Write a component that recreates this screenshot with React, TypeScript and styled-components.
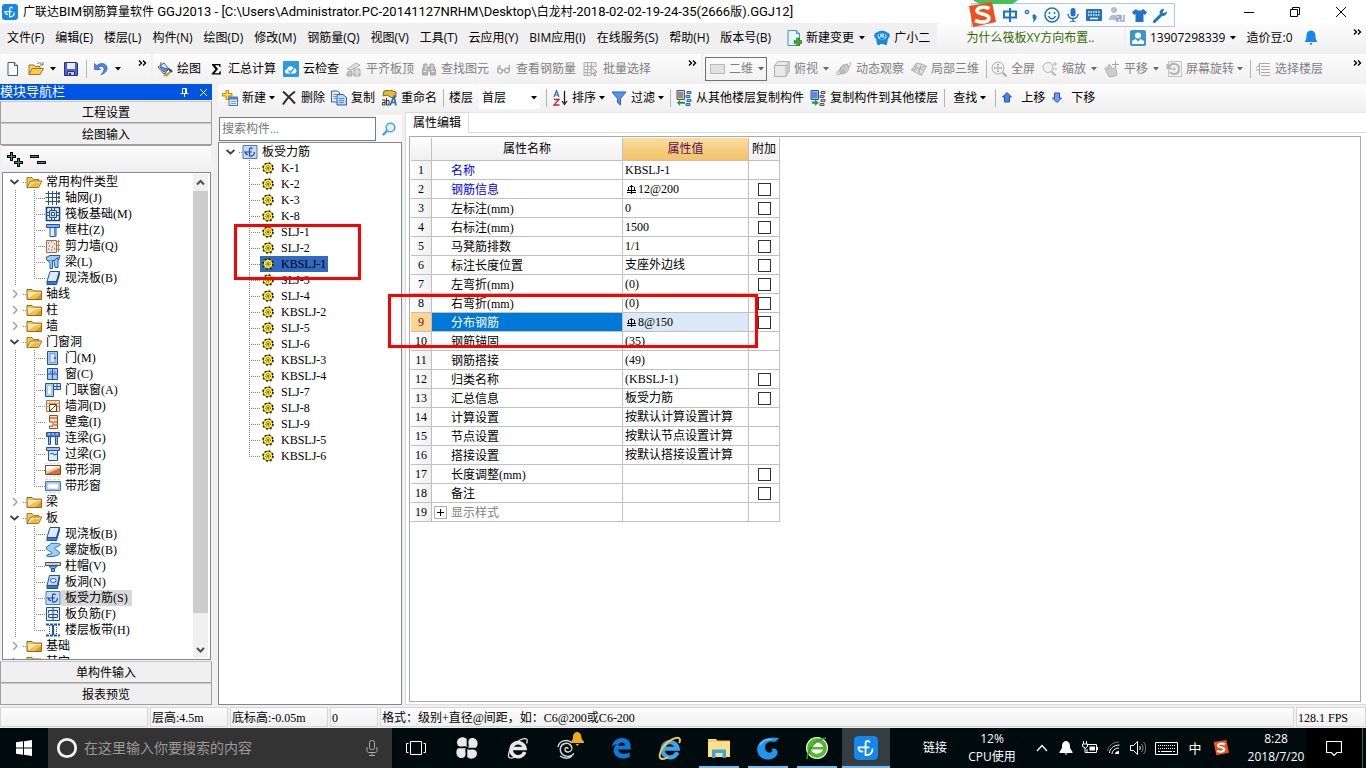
import React from 'react';
import styled, { createGlobalStyle, css } from 'styled-components';

const uiFont = '"Open Sans", "Noto Sans CJK SC", sans-serif';
const titleFont = 'Roboto, "Noto Sans CJK SC", sans-serif';
const gridFont = '"Liberation Serif", "Noto Sans CJK SC", serif';

const GlobalStyle = createGlobalStyle`
  * { box-sizing: border-box; }
  body { margin: 0; font: 12px/16px ${uiFont}; color: #000; background: #f0f0f0; }
  button, input, select { font: inherit; color: inherit; }
  button { background: none; border: 0; padding: 0; margin: 0; white-space: nowrap; }
`;

/* ---------- icons ---------- */

const blueFill = '#a9c9f7';
const blueLine = '#1f4fb0';

const icons: Record<string, React.ReactNode> = {
  app: (
    <>
      <rect width="16" height="16" rx="3" fill="#1487ea" />
      <path d="M10.300 4C9.800 2.800 7.700 2.900 7.700 4.800V12.800C10.500 12.800 12.300 11.300 12.300 8.800M3 7.600h6.800M3 7.600c0 1.800 1 2.800 2.700 2.800" fill="none" stroke="#fff" strokeWidth="1.200" strokeLinecap="round" />
    </>
  ),
  newFile: (
    <>
      <path d="M3 1.500h6.500l3 3v10H3z" fill="#fff" stroke="#3d5a85" />
      <path d="M9.500 1.500v3h3" fill="#cfe0f5" stroke="#3d5a85" />
    </>
  ),
  open: (
    <>
      <path d="M1 13.500V4h5l1 1.500h5V8" fill="#f5d27a" stroke="#a8781c" />
      <path d="M1 13.500 4 7.500h11.500L12 13.500z" fill="#ffc94a" stroke="#a8781c" />
      <path d="M9 3c2-2 4-1.500 5 .5M15 1v3h-3" fill="none" stroke="#5d7480" />
    </>
  ),
  save: (
    <>
      <path d="M1.500 1.500h12l1 1v12h-13z" fill="#5262c9" stroke="#2a2f86" />
      <path d="M4 2h8v6H4z" fill="#e8ecfb" />
      <path d="M4.500 10.500h7v4h-7z" fill="#c5cbe6" stroke="#2a2f86" />
      <path d="M6 12h2v2H6z" fill="#2a2f86" />
    </>
  ),
  undo: <path d="M1.500 2.500v6h6L5.500 6.300c3-2 6-.5 5.500 2.500-.4 2-1.500 3.200-3 5 4.500-2 6.500-4.300 6-7.300C13.300 2.500 8 1 3.800 4.600z" fill="#4c86e0" stroke="#2558b5" strokeWidth=".7" />,
  draw: (
    <>
      <path d="m1 6 6-4 5 6-5 5z" fill="#dfe9f5" stroke="#3f5f8e" />
      <path d="M4 1v6M3 6l4 5 4-3z" fill="#6f94cc" stroke="#3f5f8e" />
      <path d="m9 15 6-6M7 15l3-3" stroke="#c99a2e" strokeWidth="2" />
      <path d="m12 8 3 3" stroke="#27457a" strokeWidth="2" />
    </>
  ),
  sum: <path d="M4 3h8.500v3H11.500L11 4.300H7L10 8l-3.500 4.200H11l.8-2h1V13.500H3.700v-1L7.500 8.300 4 4z" fill="#000" />,
  cloud: (
    <>
      <rect width="16" height="16" rx="1" fill="#2a9be0" />
      <path d="M4 12.500c-3-.5-2.500-4 0-4C4.500 5 9 4 10.500 7c3.500 0 4 5 1 5.500z" fill="#fff" />
      <path d="m5.500 9.500 2 2 3.500-4" fill="none" stroke="#2a9be0" strokeWidth="1.200" />
    </>
  ),
  align: (
    <>
      <path d="m1 8 9-6 4 2-9 5z" fill="#e2e2e2" stroke="#b0b0b0" />
      <path d="M3 10h3v5H1v-3zM8 8h6v7H8z" fill="#c4c4c4" stroke="#acacac" />
      <path d="M8 11h6M11 8v7" stroke="#eee" />
    </>
  ),
  find: (
    <>
      <path d="M3 3h3v3h3V3h3l2.500 6v5h-5v-4h-3v4h-5V9z" fill="#b4b4b4" stroke="#a4a4a4" />
      <path d="M2.500 10.500h3M10.500 10.500h3M5 4v5M11 4v5" stroke="#eee" />
    </>
  ),
  glasses: (
    <g fill="none" stroke="#a8a8a8" strokeWidth="1.300">
      <circle cx="4" cy="10" r="2.300" />
      <circle cx="11" cy="9.500" r="2.300" />
      <path d="M6.200 9.500 9 9M1.800 9C2 6 4 5 5 5M13.300 9V4" />
    </g>
  ),
  batch: (
    <>
      <path d="M1 1.500h12v4H1zM1 5.500v9h6M1 8.500h7M1 11.500h6M4.500 1.500v13M8.500 1.500v5" stroke="#b0b0b0" fill="#ececec" />
      <path d="m8 6 6 5-3 .4 2 3-1.500.6-1.500-3L8 14z" fill="#eee" stroke="#9a9a9a" />
    </>
  ),
  plane: <path d="M.5 3.500h14v9H.5z" fill="#e2e2e2" stroke="#b9b9b9" />,
  cube: (
    <>
      <path d="M.5 4.500 4 .5h11.500V10L12 15.500H.5z" fill="#e9e9e9" stroke="#b0b0b0" />
      <path d="M.5 4.500H12v11M12 4.500l3.500-4" fill="none" stroke="#b0b0b0" />
      <path d="m12 4.500 3.500-4V10L12 15z" fill="#c8c8c8" />
    </>
  ),
  orbit: (
    <>
      <path d="M5 5c3-3 7-3 8 0s-1 7-5 8-6-1-5-4z" fill="#bdbdbd" />
      <path d="M13 2c4-1 1 4-4 8s-9 5-8 2 6-7 11-9" fill="none" stroke="#a9a9a9" />
      <path d="m6 5 5 6M9 4l3 5" stroke="#e5e5e5" />
    </>
  ),
  part3d: (
    <g fill="#e0e0e0" stroke="#b3b3b3">
      <path d="m.5 9 5-7 5 1 5 2-5 9.500-4-2z" />
      <path d="M5.500 2 4 10.500m6.500-7.500-3 9m-4.500-6.500 10 4M.5 9l5-1M10 14l-3-6 8-3" fill="none" />
    </g>
  ),
  zoomAll: (
    <g fill="none" stroke="#adadad">
      <circle cx="7" cy="7" r="6" fill="#f2f2f2" />
      <path d="M7 3v8M3 7h8M6 4l1-1 1 1M6 10l1 1 1-1M4 6 3 7l1 1M10 6l1 1-1 1" />
      <path d="m11.500 11.500 4 4" strokeWidth="2" />
    </g>
  ),
  zoom: (
    <g fill="none" stroke="#b3b3b3">
      <circle cx="6" cy="6.500" r="5" fill="#f2f2f2" />
      <path d="m9.500 10.500 4 4" strokeWidth="2" />
      <path d="M11 3h4M13 1v4M11 8h4" />
    </g>
  ),
  pan: (
    <>
      <path d="M1 8c0-2 2-2 3 .5L4 4.500c1-1.500 2-1 2.500 0l1.500 3c2-.5 3-.5 4 .5l1 6-4 1.500H5z" fill="#cdcdcd" stroke="#b0b0b0" />
      <path d="M11.500 0v7M8 3.500h7" stroke="#a6a6a6" />
    </>
  ),
  rotate: (
    <>
      <path d="M2.500.5h13v15h-13z" fill="#f2f2f2" stroke="#c4c4c4" />
      <path d="M3 6c2-5 10-4 10 2s-7 6-9 3" fill="none" stroke="#b0b0b0" strokeWidth="2" />
      <path d="M1 3v5h5zM6 8h4M8 6v4" fill="#b8b8b8" stroke="#b8b8b8" />
    </>
  ),
  levels: (
    <path d="M4 2.500h11M6 5.500h9M6 8.500h9M6 11.500h9M6 14.500h9M4.500 3v11M1 7l3-3M1 9h3" stroke="#a9a9a9" fill="none" />
  ),
  create: (
    <>
      <path d="M4 0h2.500v3.500H10V6H6.500v3.500H4V6H.5V3.500H4z" fill="#ffd83b" stroke="#a67c00" strokeWidth=".8" />
      <path d="M7 7h8.500v8.500H7z" fill="#dcebfb" stroke="#4b6ea8" />
      <path d="M7 7h8.500v2.500H7z" fill="#4b7fd4" />
      <path d="M9 11.500h5M9 13.500h5" stroke="#7aa0d8" />
    </>
  ),
  remove: <path d="M2 1.500c4 3.500 8 7.500 12 12M14 1.500C9 5 5.500 9 2 14.500" fill="none" stroke="#2b2b2b" strokeWidth="2" />,
  copy: (
    <g stroke="#2e5fae">
      <path d="M.5 1h6l2 2v9h-8z" fill="#e2eefc" />
      <path d="M6 4.500h6l3.500 3v7.500H6z" fill="#bcd8fa" />
      <path d="M8 8.500h5M8 10.500h5M8 12.500h5M2.500 4.500h3M2.500 6.500h3M2.500 8.500h3" fill="none" stroke="#5b8fd8" />
    </g>
  ),
  rename: (
    <>
      <path d="m3 1 6-1 6 2v5l-4 1-5-3-4 1z" fill="#e8ba3a" stroke="#80661c" />
      <path d="M1 10h3v5H1.500v-2.500H4M5.500 8v7H8v-4.500H5.500" fill="none" stroke="#333" />
      <path d="m9 15.500 4-9 2 9M10.500 12.500H14" fill="none" stroke="#2768c8" strokeWidth="1.700" />
    </>
  ),
  sort: (
    <>
      <path d="m2 7 2.500-6.500L7 7M3 5h3" fill="none" stroke="#2f67b5" strokeWidth="1.200" />
      <path d="M2 9.500h5L2 15h5.500" fill="none" stroke="#b02a3a" strokeWidth="1.300" />
      <path d="M12.500 1v12M10 11l2.500 3.500L15 11" fill="none" stroke="#111" strokeWidth="1.200" />
    </>
  ),
  filter: <path d="M1 2h14L9.500 8.500V15L6.500 12.500v-4z" fill="#5a94e8" stroke="#2c5fb5" />,
  copyFrom: (
    <>
      <path d="M1 .5h7.500v9H1z" fill="#c9c9c9" stroke="#555" />
      <path d="M2 3h5M2 5h5M2 7h5" stroke="#555" />
      <path d="m1 12.700 3-3v2h5v2H4v2z" fill="#17a03d" />
      <path d="M11 1.500h4v2h-4zM10 5.500h4v2h-4zM11 9.500h4v2h-4zM10 13.500h4v2h-4z" fill="#8dbdf5" stroke="#2e66bb" />
    </>
  ),
  copyTo: (
    <>
      <path d="M1 .5h7.500v9H1z" fill="#8fbdf3" stroke="#2b50a8" />
      <path d="M2 3h5M2 5h5M2 7h5" stroke="#2b50a8" />
      <path d="M2 11.500h3v-2l4 3.200-4 3v-2H2z" fill="#17a03d" />
      <path d="M11 1.500h4v2h-4zM10 5.500h4v2h-4zM11 9.500h4v2h-4zM10 13.500h4v2h-4z" fill="#ccc" stroke="#555" />
    </>
  ),
  up: <path d="M6 2.500 10.500 7H8.500v5h-5V7h-2z" fill="#4a86ea" stroke="#1f4fb0" />,
  down: <path d="M6 12.500 1.500 8h2V3h5v5h2z" fill="#6f9cf0" stroke="#1f4fb0" />,
  newChange: (
    <>
      <path d="M1 .5h8.500l3 3v12H1z" fill="#e9f6fd" stroke="#3c93c4" />
      <path d="M9.500.5v3h3" fill="#9fd4ef" stroke="#3c93c4" />
      <path d="M9.500 8h3v2.500H15v3h-2.500V16h-3v-2.500H7v-3h2.500z" fill="#3fa52b" stroke="#2a7c1c" strokeWidth=".6" />
    </>
  ),
  robot: (
    <>
      <path d="M3 2.500c2-2.500 8-2.500 10 0 3.500 0 3.500 5 1 6-.5 2.500-.5 4.500-1.500 6.500h-2L9.500 14h-3l-1 1h-2C2.500 13 2.500 11 2 8.500-.5 7.500-.5 2.500 3 2.500z" fill="#1b87dc" />
      <path d="M3.500 5c2-2 7-2 9 0 .5 3-1 4.500-4.500 4.500S3 8 3.500 5z" fill="#9dd6fa" />
      <path d="M5.500 4.500v2M10.500 4.500v2M6 7.800c1 .8 3 .8 4 0" fill="none" stroke="#0a4f90" />
    </>
  ),
  avatar: (
    <>
      <rect width="16" height="16" rx="2" fill="#3e93c9" />
      <circle cx="8" cy="5.500" r="3" fill="#fff" />
      <path d="M5.500 9 8 11.500 10.500 9l3.500 2v3H2v-3z" fill="#fff" />
    </>
  ),
  bell: <path d="M8 .5c4 .5 4.500 3 4.500 6 0 2 .8 4 2 5.500h-13c1.200-1.500 2-3.500 2-5.500 0-3 .5-5.500 4.500-6zM6.500 13h3L8 15.500z" fill="#1a86f0" />,
  folderOpen: (
    <>
      <path d="M1 13.500V3.500h5l1.500 2H13V8" fill="#f2c964" stroke="#a07a2c" />
      <path d="m1 13.500 3.500-6.500H16l-3.500 6.500z" fill="#fcdc84" stroke="#a07a2c" />
      <path d="m3 13 5-4h6l-2 4z" fill="#f3b838" />
    </>
  ),
  folder: (
    <>
      <path d="M1 13.500V3.500h5l1.500 1.500H15.500v8.500z" fill="#f3c04e" stroke="#8e6a1e" />
      <path d="M1.500 6.500H15" stroke="#fbe7ae" />
      <path d="M2 7h9L2 12z" fill="#fde7a5" />
      <path d="m15 8-6 5h6z" fill="#dc9a1c" />
    </>
  ),
  axisGrid: <path d="M.5 3.500H13M.5 7.500H13M.5 11.500H13M3.500 1v14M7.500 1v14M11.500 1v14M13.500 2.500h1v2h-1zM13.500 6.500h1v2h-1zM13.500 10.500h1v2h-1z" fill="none" stroke="#2749a5" />,
  raft: (
    <>
      <path d="M1.500 1.500h13v13h-13z" fill="#fff" stroke="#123f8c" strokeWidth="1.600" />
      <path d="M4.500 4.500h7v7h-7z" fill="#b9d4f8" stroke="#1c4fa0" />
      <path d="M6.500 1v3M9.500 1v3M6.500 12v3M9.500 12v3M1 6.500h3M1 9.500h3M12 6.500h3M12 9.500h3" stroke="#1c4fa0" />
      <path d="M6.500 6.500h3v3h-3z" fill="#fff" stroke="#1c4fa0" />
    </>
  ),
  column: (
    <>
      <path d="M1.500 2.500h13v3h-13z" fill="#7fb0f4" stroke={blueLine} />
      <path d="M5 5.500h6V14.500H5z" fill="#e3effd" stroke={blueLine} />
      <path d="M9 6h2v8.500H9z" fill="#5a8de0" />
    </>
  ),
  shearWall: (
    <>
      <path d="M1.500 2.500h10v12h-10z" fill="#f2e6dc" stroke="#b9653a" />
      <path d="M3 5h1M6 4h1M9 6h1M4 8h1M7 9h1M3 11h1M6 12h1M9 11h1" stroke="#444" />
      <path d="M12 3.500h3M12 7.500h3M12 11.500h3M13.500 2v12" stroke="#d77a45" />
    </>
  ),
  beam: (
    <g fill={blueFill} stroke="#1b5fa8">
      <path d="M1 3.500 5 1.500h10l-1 4-4 1H2z" />
      <path d="m3 6.500 2 3v5h2.500v-8M9 6.500l4-3v10h-3z" />
    </g>
  ),
  slab: (
    <>
      <path d="M5 1.500h9.500l-3 10H2z" fill="#dcebfd" stroke={blueLine} />
      <path d="M2 11.500h9.500l3-10v3l-3 10H2z" fill="#3d76d8" stroke={blueLine} />
    </>
  ),
  door: (
    <>
      <path d="M2.500 1.500h10v13h-10z" fill={blueFill} stroke={blueLine} />
      <path d="M5 3.500h5v9H5z" fill="#d7e7fc" stroke="#6d98dd" />
      <path d="M9 8h2" stroke="#123" />
    </>
  ),
  window: (
    <>
      <path d="M2.500 2.500h10v11h-10z" fill={blueFill} stroke={blueLine} />
      <path d="M7.500 3v10M3 8h9M5 6h1.500M9 6h1.500" stroke={blueLine} />
    </>
  ),
  doorWindow: (
    <>
      <path d="M.5 1.500h8v13h-8z" fill={blueFill} stroke={blueLine} />
      <path d="M3 4h3v8H3z" fill="#fff" />
      <path d="M8.500 1.500h7v6h-7zM12 2v5M9 4.500h6" fill="#dbe9fc" stroke={blueLine} />
    </>
  ),
  wallHole: (
    <>
      <path d="M1.500 2.500h13v11h-13z" fill="#fbe9da" stroke="#c86a32" />
      <path d="M1.500 5.500h13M1.500 8.500h2M12 8.500h2M5 2.500v3M10 2.500v3" stroke="#dd9767" />
      <path d="M4.500 6.500h7v7h-7zM5 13l6-6" fill="#fff" stroke="#6b3b1c" />
    </>
  ),
  niche: <path d="M4.500 1.500h8v13h-8V12H8V8H4.500zM5 4h7M9 8h3M9 11h3" fill="#fbe0cc" stroke="#a24a16" />,
  linkBeam: (
    <>
      <path d="M1.500 2.500h13v4h-13z" fill="#4d7ccf" stroke={blueLine} />
      <path d="M3 4h2M7 4h2M11 4h2" stroke="#dcebfd" />
      <path d="M3.500 6.500h2v8h-2zM10.500 6.500h2v8h-2z" fill="#9cc1f6" stroke={blueLine} />
    </>
  ),
  lintel: (
    <>
      <path d="M1.500 1.500h13v3h-13z" fill="#9cc1f6" stroke={blueLine} />
      <path d="M3.500 4.500h9v10h-9z" fill="#dcebfd" stroke={blueLine} />
      <path d="m5 8 3-1 1 2 3-1" fill="none" stroke={blueLine} />
    </>
  ),
  stripHole: (
    <>
      <path d="M.5 3.500h15v9H.5z" fill="#f3c9a8" stroke="#8d4116" />
      <path d="M1 4h14L1 9z" fill="#fff" />
      <path d="m1 12 14-6v6z" fill="#c97441" />
      <path d="M.5 1.500h15M.5 14.500h15" stroke="#f5c7b5" strokeDasharray="2 2" />
    </>
  ),
  stripWindow: (
    <>
      <path d="M.5 3.500h15v9H.5z" fill="#9cc1f6" stroke="#5573b8" />
      <path d="M3 6h10v4.500H3z" fill="#fff" stroke="#dbe6fa" />
      <path d="M.5 1.500h15M.5 14.500h15" stroke="#f5b7a5" strokeDasharray="2 2" />
    </>
  ),
  spiral: <path d="M6 1.500c5-.5 9 0 9.500 1-1 2-6 2.500-6 4s5 2 5 4.500-7 4.500-13 3c0-2 5-1.500 5.500-3S1.500 9 1.500 6.500 4 4 6 1.500z" fill="#9fd0f5" stroke="#1c6fb5" />,
  cap: (
    <>
      <path d="M.5 4.500h15v3H.5z" fill="#ccc" stroke="#555" />
      <path d="M4 8h8l-2 2.500H6zM6.500 10.500h3v3h-3z" fill="#7fb0f4" stroke={blueLine} />
    </>
  ),
  slabHole: (
    <>
      <path d="M4.500 1.500h10l-2 10H2z" fill="#c7ddfb" stroke={blueLine} />
      <path d="M2 11.500h10.500l2-10v3l-2 10H2z" fill="#3d76d8" stroke={blueLine} />
      <ellipse cx="8.300" cy="6.500" rx="2.800" ry="2" fill="#fff" stroke={blueLine} />
    </>
  ),
  slabBar: (
    <>
      <path d="M1 1.500h14v13H1z" fill="#c5dbf9" stroke="#4a78c4" />
      <path d="M10.500 5C10 3.300 7.500 3.500 7.500 5v7c3 .5 5-1 5-4M2 8h8M3.500 8c0 2 .8 2.700 2.500 2.700" fill="none" stroke="#1d4a9e" strokeWidth="1.200" />
    </>
  ),
  negBar: (
    <>
      <path d="M1.500 1.500h13v13h-13z" fill="#e1edfd" stroke={blueLine} />
      <path d="M8 2v12M3.500 7V4.500h9V7M3.500 11V8.500h9V11M3.500 11.500h9" fill="none" stroke="#1d4a9e" />
    </>
  ),
  stripe: (
    <>
      <path d="M1 2.500h14M1 13.500h14" stroke={blueLine} strokeWidth="2" strokeDasharray="3 1" />
      <path d="M4.500 3v10M11.500 3v10" stroke={blueLine} strokeDasharray="1 1" />
      <path d="M8 3v10" stroke={blueLine} strokeWidth="2" />
    </>
  ),
  gear: (
    <>
      <circle cx="8" cy="8" r="4.800" fill="#fff04a" stroke="#8a8000" />
      <circle cx="8" cy="8" r="5" fill="none" stroke="#1c1a00" strokeWidth="1.600" strokeDasharray="1.800 2.130" />
      <circle cx="8" cy="8" r="2.400" fill="none" stroke="#4b4500" strokeWidth=".9" strokeDasharray="1 1" />
      <circle cx="8" cy="8" r="1" fill="#fff" stroke="#3c3700" strokeWidth=".8" />
    </>
  ),
  search: (
    <>
      <circle cx="9.500" cy="6.500" r="4.300" fill="#e8f4fd" stroke="#4aa3df" strokeWidth="1.600" />
      <path d="m6.300 9.700-4.500 4.500" stroke="#4aa3df" strokeWidth="2.400" />
    </>
  ),
};

const Svg = styled.svg`
  display: block;
  flex: none;
`;

const Icon = ({ name, width = 16 }: { name: string; width?: number }) => (
  <Svg width={width} height="16" viewBox={`0 0 ${width} 16`} aria-hidden="true">
    {icons[name]}
  </Svg>
);

const CaretSvg = styled(Svg)<{ $lead: number }>`
  margin-left: ${p => p.$lead}px;
`;
const Caret = ({ lead = 0, color = '#000' }: { lead?: number; color?: string }) => (
  <CaretSvg $lead={lead} width="6" height="4" viewBox="0 0 6 4" aria-hidden="true">
    <path d="M0 0h6L3 3.500z" fill={color} />
  </CaretSvg>
);

const MoreSvg = styled(Svg)`
  margin: 0 4px 12px auto;
`;
const More = () => (
  <MoreSvg width="9" height="6" viewBox="0 0 9 6" aria-hidden="true">
    <path d="m1 .5 2.500 2.500L1 5.500M5 .5 7.500 3 5 5.500" fill="none" stroke="#000" strokeWidth="1.400" />
  </MoreSvg>
);

const Chevron = ({ open }: { open: boolean }) => (
  <Svg width="17" height="16" viewBox="0 0 17 16" aria-hidden="true">
    <path d={open ? 'M4.500 6 8.500 9.500 12.500 6' : 'M7 4l4 4-4 4'} fill="none" stroke={open ? '#404040' : '#a6a6a6'} strokeWidth={open ? 1.8 : 1.5} />
  </Svg>
);

/* ---------- window frame ---------- */

const Desktop = styled.div`
  position: relative;
  display: flex;
  flex-direction: column;
  height: 100vh;
  overflow: hidden;
`;

const TitleBar = styled.header`
  display: flex;
  align-items: center;
  flex: none;
  height: 23px;
  padding: 0 2px;
  background: #fff;
`;

const Title = styled.h1`
  flex: 1;
  margin: 0 0 0 5px;
  font: 400 13px/16px ${titleFont};
  white-space: nowrap;
`;

const Han = styled.span`
  font-size: 12px;
`;

const WindowButton = styled.button`
  display: flex;
  align-items: center;
  justify-content: center;
  width: 46px;
  height: 23px;
`;

const BarRow = styled.div<{ $height: number }>`
  display: flex;
  flex: none;
  gap: 2px;
  height: ${p => p.$height}px;
`;

const Band = styled.div<{ $width?: number; $gap?: number; $lead?: number; $plain?: boolean }>`
  display: flex;
  align-items: center;
  flex: ${p => (p.$width ? `0 0 ${p.$width}px` : '1')};
  min-width: 0;
  gap: ${p => p.$gap ?? 7}px;
  padding-left: ${p => p.$lead ?? 4}px;
  margin-bottom: 1px;
  border-radius: 3px 0 0 3px;
  background: ${p => (p.$plain ? 'none' : 'linear-gradient(#fdfdfd, #f0f0f0)')};
  font-family: ${uiFont};
`;

const MenuList = styled.div`
  display: flex;
  flex: none;
  gap: 11px;
  padding-right: 7px;
`;

const ToolButton = styled.button<{ $framed?: boolean; $inset?: boolean }>`
  display: flex;
  align-items: center;
  flex: none;
  gap: 4px;
  padding: 0 ${p => (p.$inset ? 3 : 0)}px;
  &:disabled { color: #808080; }
  ${p => p.$framed && css`
    height: 24px;
    width: 62px;
    padding: 0 4px;
    border: 1px solid #707070;
  `}
`;

const Label = styled.span<{ $pad?: number }>`
  padding-right: ${p => p.$pad ?? 0}px;
`;

type ToolProps = { icon?: string; label: string; caret?: 'near' | 'far'; off?: boolean; framed?: boolean; inset?: boolean; iconWidth?: number };
const Tool = ({ icon, label, caret, off, framed, inset, iconWidth }: ToolProps) => (
  <ToolButton disabled={off} $framed={framed} $inset={inset}>
    {icon && <Icon name={icon} width={iconWidth} />}
    <Label $pad={caret === 'near' ? 1 : 0}>{label}</Label>
    {caret && <Caret lead={caret === 'far' ? 1 : -2} color={off ? '#666' : '#000'} />}
  </ToolButton>
);

const IconButton = styled.button`
  display: flex;
  align-items: center;
  flex: none;
`;

const Separator = styled.span<{ $pull?: number }>`
  flex: none;
  width: 1px;
  height: 18px;
  margin-right: ${p => -(p.$pull ?? 1)}px;
  background: #b4b4b4;
`;

const NewsLink = styled.a`
  margin: 0 auto;
  color: #2f6b00;
  text-decoration: none;
  white-space: nowrap;
`;

const ImeBar = styled.div`
  position: absolute;
  top: 3px;
  right: 191px;
  width: 204px;
  height: 24px;
  display: flex;
  align-items: center;
  gap: 6px;
  padding-left: 30px;
  border: 1px solid #b5c7dc;
  background: #f9fcff;
`;

const ImeLogo = styled.svg`
  position: absolute;
  left: -4px;
  top: -4px;
`;

/* ---------- workspace ---------- */

const Workspace = styled.main`
  display: flex;
  flex: 1;
  min-height: 0;
  font-family: ${gridFont};
`;

const NavPanel = styled.aside`
  display: flex;
  flex-direction: column;
  flex: none;
  width: 213px;
  padding: 0 1px 2px 0;
`;

const NavHeader = styled.div`
  display: flex;
  align-items: center;
  flex: none;
  gap: 10px;
  height: 16px;
  padding-right: 4px;
  margin-bottom: 1px;
  background: #0054e3;
  color: #fff;
`;

const NavTitle = styled.span`
  flex: 1;
  font-size: 13px;
`;

const SectionButton = styled.button`
  flex: none;
  height: 22px;
  padding-top: 1px;
  border: 1px solid #a0a0a0;
  border-top-color: #c8c8c8;
  background: #f0f0f0;
  text-align: center;
`;

const NavTools = styled.div`
  display: flex;
  align-items: center;
  flex: none;
  gap: 7px;
  height: 27px;
  margin: 0 1px 0 2px;
  padding: 2px 0 0 5px;
  border-top: 1px solid #a0a0a0;
  background: linear-gradient(#fcfcfc, #efefef);
`;

const TreeFrame = styled.div<{ $nav?: boolean }>`
  display: flex;
  flex: 1;
  min-height: 0;
  margin: ${p => (p.$nav ? '0 1px 1px 2px' : '0')};
  border: 1px solid #828790;
  background: #fff;
  overflow: hidden;
`;

const TreeList = styled.ul`
  flex: 1;
  min-width: 0;
  margin: 0;
  padding: 1px 0 0 3px;
  list-style: none;
  overflow: hidden;
`;

const SubList = styled.ul`
  margin: 0;
  padding: 0;
  list-style: none;
`;

const dotsDown = 'repeating-linear-gradient(#8a8a8a 0 1px, transparent 1px 2px)';
const dotsAcross = 'repeating-linear-gradient(90deg, #8a8a8a 0 1px, transparent 1px 2px)';

const TreeRow = styled.div`
  display: flex;
  align-items: center;
  height: 16px;
  white-space: nowrap;
`;

const Gutter = styled.span<{ $line: boolean; $width: number }>`
  flex: none;
  width: ${p => p.$width}px;
  height: 16px;
  background: ${p => (p.$line ? `${dotsDown} 9px 0 / 1px 100% no-repeat` : 'none')};
`;

const Elbow = styled.span<{ $last: boolean }>`
  flex: none;
  width: 11px;
  height: 16px;
  background: ${dotsDown} 0 0 / 1px ${p => (p.$last ? '8px' : '16px')} no-repeat,
    ${dotsAcross} 0 8px / 100% 1px no-repeat;
`;

const Dash = styled.span`
  flex: none;
  width: 3px;
  height: 1px;
  background: ${dotsAcross};
`;

const NodeLabel = styled.span<{ $tone?: 'grey'; $lead: number }>`
  display: flex;
  align-items: center;
  height: 16px;
  padding: 0 4px 0 ${p => p.$lead}px;
  background: ${p => (p.$tone === 'grey' ? '#d9d9d9' : 'none')};
`;

const ComponentNode = styled.span<{ $active: boolean }>`
  display: flex;
  align-items: center;
  height: 16px;
  gap: 5px;
  padding-right: 2px;
  background: ${p => (p.$active ? '#316ac5' : 'none')};
`;

const Scrollbar = styled.div`
  display: flex;
  flex-direction: column;
  align-items: center;
  justify-content: space-between;
  flex: none;
  width: 15px;
  margin: 1px 2px 1px 0;
  background: #f0f0f0;
`;

const Thumb = styled.div`
  flex: 0 0 422px;
  width: 15px;
  margin-bottom: auto;
  background: #cdcdcd;
`;

const ScrollArrow = styled.button`
  display: flex;
  align-items: center;
  justify-content: center;
  width: 15px;
  height: 17px;
`;

const Content = styled.div`
  display: flex;
  flex-direction: column;
  flex: 1;
  min-width: 0;
  padding-left: 5px;
`;

const FloorLabel = styled.label`
  display: flex;
  align-items: center;
  flex: none;
  gap: 6px;
`;

const FloorBox = styled.span`
  display: flex;
  align-items: center;
  width: 61px;
  height: 22px;
  padding-right: 3px;
  background: #fff;
`;

const FloorSelect = styled.select`
  appearance: none;
  flex: 1;
  min-width: 0;
  padding: 0 3px;
  border: 0;
  outline: 0;
  background: none;
`;

const Columns = styled.div`
  display: flex;
  flex: 1;
  min-height: 0;
`;

const ComponentPanel = styled.section`
  display: flex;
  flex-direction: column;
  flex: none;
  width: 184px;
  margin: 3px 3px 2px 0;
`;

const SearchRow = styled.div`
  display: flex;
  align-items: center;
  flex: none;
  gap: 5px;
  height: 27px;
  padding: 2px 5px 1px 1px;
  background: linear-gradient(90deg, #f0f0f0 157px, #fafafa 157px);
`;

const SearchInput = styled.input`
  flex: 1;
  min-width: 0;
  height: 24px;
  padding: 0 2px;
  border: 1px solid #7a7a7a;
  border-radius: 0;
  background: #fff;
  &::placeholder { color: #757575; opacity: 1; }
`;

const EditorPanel = styled.section`
  display: flex;
  flex-direction: column;
  flex: 1;
  min-width: 0;
  margin-bottom: 2px;
  border-left: 1px solid #dcdcdc;
  border-bottom: 1px solid #dcdcdc;
  background: #fff;
`;

const TabStrip = styled.div`
  display: flex;
  flex: none;
  height: 21px;
`;

const Tab = styled.button`
  width: 63px;
  border-top: 1px solid #dcdcdc;
  border-right: 1px solid #dcdcdc;
`;

const TabRest = styled.div`
  flex: 1;
  border-top: 1px solid #e8e8e8;
  border-bottom: 1px solid #dcdcdc;
`;

const Sheet = styled.div`
  flex: 1;
  min-height: 0;
  margin: 3px 5px 2px 3px;
  padding: 1px;
  border: 1px solid #a9a9a9;
  overflow: hidden;
`;

const Grid = styled.table`
  width: 369px;
  table-layout: fixed;
  border-collapse: separate;
  border-spacing: 0;
`;

const cell = css`
  padding: 0;
  border-right: 1px solid #c0c0c0;
  border-bottom: 1px solid #c0c0c0;
  font-weight: 400;
  white-space: nowrap;
  overflow: hidden;
`;

const HeadCell = styled.th<{ $current?: boolean }>`
  ${cell}
  height: 23px;
  color: ${p => (p.$current ? '#5c0a5c' : '#000')};
  background: ${p => (p.$current ? 'linear-gradient(#fbdca0, #f3c264)' : 'linear-gradient(#fdfdfd, #f0f0f0)')};
`;

const IndexCell = styled.th<{ $current: boolean }>`
  ${cell}
  height: 19px;
  color: ${p => (p.$current ? '#5c0a5c' : '#000')};
  background: ${p => (p.$current ? '#ffd58d' : 'linear-gradient(90deg, #fdfdfd, #f0f0f0)')};
`;

const NameCell = styled.td<{ $tone?: string; $current: boolean }>`
  ${cell}
  padding-top: 1px;
  color: ${p => (p.$current ? '#fff' : p.$tone ?? '#000')};
  background: ${p => (p.$current ? '#0078d7' : '#fff')};
`;

const NameInner = styled.div<{ $expandable: boolean }>`
  display: flex;
  align-items: center;
  gap: 4px;
  padding-left: ${p => (p.$expandable ? 2 : 19)}px;
`;

const ValueCell = styled.td<{ $current: boolean }>`
  ${cell}
  padding-left: 2px;
  background: ${p => (p.$current ? '#d9e9f8' : '#fff')};
`;

const CheckCell = styled.td`
  ${cell}
  text-align: center;
`;

const Check = styled.input`
  appearance: none;
  display: block;
  width: 13px;
  height: 13px;
  margin: 0 auto;
  border: 1px solid #333;
  background: #fff;
`;

const Expander = styled.button`
  display: flex;
  align-items: center;
  justify-content: center;
  width: 13px;
  height: 13px;
  border: 1px solid #b0b0b0;
`;

const BarMark = styled.svg`
  display: inline-block;
  margin: 0 1px;
  vertical-align: -1px;
`;

const StatusBar = styled.footer`
  display: flex;
  flex: none;
  gap: 2px;
  height: 21px;
  padding-bottom: 1px;
  background: #f0f0f0;
  font-family: ${gridFont};
`;

const StatusCell = styled.div<{ $width?: number }>`
  flex: ${p => (p.$width ? `0 0 ${p.$width}px` : '1')};
  padding: 2px 0 0 1px;
  border: 1px solid #d5d5d5;
  background: linear-gradient(#fdfdfd, #f0f0f0);
  white-space: nowrap;
`;

/* ---------- taskbar ---------- */

const Taskbar = styled.nav`
  display: flex;
  flex: none;
  height: 40px;
  background: #000b0d;
  color: #fff;
`;

const TaskButton = styled.button<{ $running?: boolean; $active?: boolean }>`
  display: flex;
  align-items: center;
  justify-content: center;
  width: 48px;
  height: 40px;
  background: ${p => (p.$active ? '#343d40' : 'none')};
  ${p => (p.$running || p.$active) && css`
    background-image: linear-gradient(#76b9ed, #76b9ed);
    background-size: ${p.$active ? 48 : 40}px 2px;
    background-position: bottom center;
    background-repeat: no-repeat;
  `}
`;

const TaskGroup = styled.div<{ $gap: number; $lead?: number }>`
  display: flex;
  gap: ${p => p.$gap}px;
  margin-left: ${p => p.$lead ?? 0}px;
`;

const SearchBox = styled.label`
  display: flex;
  align-items: center;
  flex: 0 0 344px;
  gap: 6px;
  padding: 0 12px 0 8px;
  background: #333;
`;

const TaskSearch = styled.input`
  flex: 1;
  min-width: 0;
  border: 0;
  padding: 0;
  outline: 0;
  background: none;
  font-size: 14px;
  &::placeholder { color: #999; opacity: 1; }
`;

const Tray = styled.div`
  display: flex;
  align-items: center;
  margin-left: auto;
`;

const TrayText = styled.div<{ $width: number; $before?: number }>`
  width: ${p => p.$width}px;
  margin-left: ${p => p.$before ?? 0}px;
  line-height: 18px;
  text-align: center;
  white-space: nowrap;
`;

const TrayIcons = styled.div`
  display: flex;
  margin-left: 13px;
`;

const TrayButton = styled.button<{ $width?: number }>`
  display: flex;
  align-items: center;
  justify-content: center;
  width: ${p => p.$width ?? 24}px;
  height: 40px;
  font-size: 13px;
`;

const ActionCenter = styled(TrayButton)`
  background: #000;
`;

const ShowDesktop = styled.button`
  width: 4px;
  height: 40px;
  border-left: 1px solid #5a5a5a;
`;

const Marker = styled.div<{ $x: number; $y: number; $w: number; $h: number }>`
  position: absolute;
  left: ${p => p.$x}px;
  top: ${p => p.$y}px;
  width: ${p => p.$w}px;
  height: ${p => p.$h}px;
  border: 3px solid #f00;
  pointer-events: none;
`;

/* ---------- data ---------- */

const menus = ['文件(F)', '编辑(E)', '楼层(L)', '构件(N)', '绘图(D)', '修改(M)', '钢筋量(Q)', '视图(V)', '工具(T)', '云应用(Y)', 'BIM应用(I)', '在线服务(S)', '帮助(H)', '版本号(B)'];

type Leaf = [icon: string, label: string];
type Folder = { label: string; items?: Leaf[] };

const folders: Folder[] = [
  { label: '常用构件类型', items: [['axisGrid', '轴网(J)'], ['raft', '筏板基础(M)'], ['column', '框柱(Z)'], ['shearWall', '剪力墙(Q)'], ['beam', '梁(L)'], ['slab', '现浇板(B)']] },
  { label: '轴线' },
  { label: '柱' },
  { label: '墙' },
  { label: '门窗洞', items: [['door', '门(M)'], ['window', '窗(C)'], ['doorWindow', '门联窗(A)'], ['wallHole', '墙洞(D)'], ['niche', '壁龛(I)'], ['linkBeam', '连梁(G)'], ['lintel', '过梁(G)'], ['stripHole', '带形洞'], ['stripWindow', '带形窗']] },
  { label: '梁' },
  { label: '板', items: [['slab', '现浇板(B)'], ['spiral', '螺旋板(B)'], ['cap', '柱帽(V)'], ['slabHole', '板洞(N)'], ['slabBar', '板受力筋(S)'], ['negBar', '板负筋(F)'], ['stripe', '楼层板带(H)']] },
  { label: '基础' },
  { label: '其它' },
];

const components = ['K-1', 'K-2', 'K-3', 'K-8', 'SLJ-1', 'SLJ-2', 'KBSLJ-1', 'SLJ-3', 'SLJ-4', 'KBSLJ-2', 'SLJ-5', 'SLJ-6', 'KBSLJ-3', 'KBSLJ-4', 'SLJ-7', 'SLJ-8', 'SLJ-9', 'KBSLJ-5', 'KBSLJ-6'];

type Property = { name: string; value?: string; check?: boolean; bar?: boolean; tone?: string; expandable?: boolean };
const properties: Property[] = [
  { name: '名称', value: 'KBSLJ-1', tone: '#00f' },
  { name: '钢筋信息', value: '12@200', bar: true, check: true, tone: '#00f' },
  { name: '左标注(mm)', value: '0', check: true },
  { name: '右标注(mm)', value: '1500', check: true },
  { name: '马凳筋排数', value: '1/1', check: true },
  { name: '标注长度位置', value: '支座外边线', check: true },
  { name: '左弯折(mm)', value: '(0)', check: true },
  { name: '右弯折(mm)', value: '(0)', check: true },
  { name: '分布钢筋', value: '8@150', bar: true, check: true },
  { name: '钢筋锚固', value: '(35)' },
  { name: '钢筋搭接', value: '(49)' },
  { name: '归类名称', value: '(KBSLJ-1)', check: true },
  { name: '汇总信息', value: '板受力筋', check: true },
  { name: '计算设置', value: '按默认计算设置计算' },
  { name: '节点设置', value: '按默认节点设置计算' },
  { name: '搭接设置', value: '按默认搭接设置计算' },
  { name: '长度调整(mm)', check: true },
  { name: '备注', check: true },
  { name: '显示样式', tone: '#808080', expandable: true },
];
const currentRow = 8;

/* ---------- sections ---------- */

const Glyph = ({ size, children, box = 24, height }: { size: number; box?: number; height?: number; children: React.ReactNode }) => (
  <Svg width={size} height={height ?? size} viewBox={`0 0 ${box} ${height ? (box * height) / size : box}`} fill="none" aria-hidden="true">
    {children}
  </Svg>
);

const Ime = () => (
  <ImeBar>
    <ImeLogo width="52" height="32" viewBox="0 0 52 32" aria-hidden="true">
      <path d="M5 0h45a22 22 0 0 1-6 4H12A22 22 0 0 1 5 0z" fill="#45c15a" />
      <path d="M1 6 24 2l4 20-23 5z" fill="#f04e1f" />
      <path d="M21.500 8.500C15 6 9 7.500 9 11s12 2.500 12 7-8 5-14 2.500" stroke="#fff" strokeWidth="3.600" fill="none" />
    </ImeLogo>
    <Glyph size={16} box={16}><path d="M2 4.500h12v6H2zM8 1v14" stroke="#1f72c8" strokeWidth="2" /></Glyph>
    <Glyph size={14} box={14}><circle cx="3" cy="4" r="1.600" stroke="#1f72c8" strokeWidth="1.400" /><path d="M9 7c3.500-1 4.500 3.500.5 6.500 1-1.500.5-2.500-.3-3z" fill="#1f72c8" stroke="#1f72c8" /></Glyph>
    <Glyph size={16} box={16}><circle cx="8" cy="8" r="7" stroke="#1f72c8" strokeWidth="1.500" /><path d="M5.500 5v2M10.500 5v2M4.500 9c1.500 3.500 5.500 3.500 7 0" stroke="#1f72c8" strokeWidth="1.500" /></Glyph>
    <Glyph size={14} box={14}><rect x="4.500" y="0" width="5" height="8.500" rx="2.500" fill="#1f72c8" /><path d="M2 6c0 6 10 6 10 0M7 10.500V14M4 14h6" stroke="#1f72c8" strokeWidth="1.500" /></Glyph>
    <Glyph size={16} box={16}><rect y="2" width="16" height="12" rx="1" fill="#1f72c8" /><path d="M2 5h12M2 8h12" stroke="#fff" strokeWidth="1.500" strokeDasharray="1.500 1" /><path d="M4 11.500h8" stroke="#fff" strokeWidth="1.500" /></Glyph>
    <Glyph size={18} box={18}><circle cx="6" cy="4" r="3" fill="#b3bfd2" /><path d="M1 14c0-7 9-7 10 0z" fill="#b3bfd2" /><path d="M8.500 9.500h3v3h-3v2.500h3M13 9v6h3V9" stroke="#9aaac4" strokeWidth="1.500" /></Glyph>
    <Glyph size={15} box={15}><path d="M4 1c1.500 2 5.500 2 7 0l4 3-2 3-1.500-1v8h-8V6L2 7 0 4z" fill="#1f72c8" /></Glyph>
    <Glyph size={15} box={15}><path d="m1.500 13.500 7-7" stroke="#1f72c8" strokeWidth="3" strokeLinecap="round" /><path d="M13.500 4 11 6 9 4.500 10.500 1.500C7.500 1 6.500 4 7.500 6s5.500 2.500 6-2z" fill="#1f72c8" stroke="#1f72c8" /></Glyph>
  </ImeBar>
);

const NavTree = () => (
  <TreeFrame $nav>
    <TreeList>
      {folders.map(folder => (
        <li key={folder.label}>
          <TreeRow>
            <Chevron open={!!folder.items} />
            <Dash />
            <Icon name={folder.items ? 'folderOpen' : 'folder'} width={17} />
            <NodeLabel $lead={3}>{folder.label}</NodeLabel>
          </TreeRow>
          {folder.items && (
            <SubList>
              {folder.items.map(([icon, label], i) => (
                <TreeRow as="li" key={label}>
                  <Gutter $line $width={28} />
                  <Elbow $last={i === folder.items!.length - 1} />
                  <Icon name={icon} />
                  <NodeLabel $lead={4} $tone={label.startsWith('板受力筋') ? 'grey' : undefined}>{label}</NodeLabel>
                </TreeRow>
              ))}
            </SubList>
          )}
        </li>
      ))}
    </TreeList>
    <Scrollbar>
      <ScrollArrow aria-label="向上滚动"><Glyph size={9} box={9}><path d="m1 6.500 3.500-3.500L8 6.500" stroke="#505050" strokeWidth="2" /></Glyph></ScrollArrow>
      <Thumb />
      <ScrollArrow aria-label="向下滚动"><Glyph size={9} box={9}><path d="m1 3 3.500 3.500L8 3" stroke="#505050" strokeWidth="2" /></Glyph></ScrollArrow>
    </Scrollbar>
  </TreeFrame>
);

const Navigation = () => (
  <NavPanel>
    <NavHeader>
      <NavTitle>模块导航栏</NavTitle>
      <IconButton aria-label="固定"><Glyph size={9} box={9}><path d="M2.500 5V.5h4V5M.5 5.500h8M4.500 5.500V9M5.500 1v4" stroke="#fff" /></Glyph></IconButton>
      <IconButton aria-label="关闭"><Glyph size={9} box={9}><path d="m1 1 7 7M8 1 1 8" stroke="#fff" /></Glyph></IconButton>
    </NavHeader>
    <SectionButton>工程设置</SectionButton>
    <SectionButton>绘图输入</SectionButton>
    <NavTools>
      <IconButton aria-label="全部展开"><Glyph size={16} box={16}><path d="M4.500 0v9M0 4.500h9M11.500 6v9M7 10.500h9" stroke="#000" strokeWidth="3" /><path d="M4.500 1v7M1 4.500h7M11.500 7v7M8 10.500h7" stroke="#1c9c8c" /></Glyph></IconButton>
      <IconButton aria-label="全部折叠"><Glyph size={16} box={16}><path d="M0 4.500h9M7 10.500h9" stroke="#000" strokeWidth="3" /><path d="M1 4.500h7M8 10.500h7" stroke="#1c9c8c" /></Glyph></IconButton>
    </NavTools>
    <NavTree />
    <SectionButton>单构件输入</SectionButton>
    <SectionButton>报表预览</SectionButton>
  </NavPanel>
);

const ComponentList = () => (
  <ComponentPanel>
    <SearchRow>
      <SearchInput aria-label="搜索构件" placeholder="搜索构件..." />
      <IconButton aria-label="搜索"><Icon name="search" /></IconButton>
    </SearchRow>
    <TreeFrame>
      <TreeList>
        <li>
          <TreeRow>
            <Chevron open />
            <Dash />
            <Icon name="slabBar" />
            <NodeLabel $lead={4}>板受力筋</NodeLabel>
          </TreeRow>
          <SubList>
            {components.map((name, i) => (
              <TreeRow as="li" key={name}>
                <Gutter $line={false} $width={27} />
                <Elbow $last={i === components.length - 1} />
                <ComponentNode $active={name === 'KBSLJ-1'}>
                  <Icon name="gear" />
                  {name}
                </ComponentNode>
              </TreeRow>
            ))}
          </SubList>
        </li>
      </TreeList>
    </TreeFrame>
  </ComponentPanel>
);

const PropertyGrid = () => (
  <Grid>
    <colgroup>
      <col width="21" />
      <col width="191" />
      <col width="126" />
      <col width="31" />
    </colgroup>
    <thead>
      <tr>
        <HeadCell />
        <HeadCell scope="col">属性名称</HeadCell>
        <HeadCell scope="col" $current>属性值</HeadCell>
        <HeadCell scope="col">附加</HeadCell>
      </tr>
    </thead>
    <tbody>
      {properties.map((p, i) => (
        <tr key={p.name}>
          <IndexCell scope="row" $current={i === currentRow}>{i + 1}</IndexCell>
          <NameCell $tone={p.tone} $current={i === currentRow}>
            <NameInner $expandable={!!p.expandable}>
              {p.expandable && (
                <Expander aria-label="展开"><Glyph size={7} box={7}><path d="M3.500 0v7M0 3.500h7" stroke="#000" /></Glyph></Expander>
              )}
              {p.name}
            </NameInner>
          </NameCell>
          <ValueCell $current={i === currentRow}>
            {p.bar && (
              <BarMark width="11" height="9" viewBox="0 0 11 9" role="img" aria-label="三级钢">
                <path d="M5.500 0v9M3.500 1.500h4M2.500 2v4M8.500 2v4M1 5.500h9M1 7.500h9" fill="none" stroke="#000" />
              </BarMark>
            )}
            {p.value}
          </ValueCell>
          <CheckCell>{p.check && <Check type="checkbox" aria-label={`附加 ${p.name}`} />}</CheckCell>
        </tr>
      ))}
    </tbody>
  </Grid>
);

const swirl = 'M13 12c0-2-3-2-3 .5 0 3 5 3.500 6.500.5 1.500-4-2.500-7.500-6.500-6.500-5 1-6 7-3 10.500s9 3 12-.5M17 6C12 1 4 4 3 10M5 19c4 3 9 3 12 0';
const letterBody = 'M18.700 16A7 7 0 1 1 19 12.500H6.500';
const letterRing = 'M20.500 7.500C22.500 3 20.500 1 14 4 7.500 7 2 15 2.500 20c.3 3 4 2.500 7.500.5';

const WindowsTaskbar = () => (
  <Taskbar>
    <TaskButton aria-label="开始">
      <Glyph size={16} box={16}><path d="M0 2.300 7 1.300V7.500H0zM8 1.200 16 0v7.500H8zM0 8.500h7v6.200L0 13.700zM8 8.500h8V16l-8-1.200z" fill="#fff" /></Glyph>
    </TaskButton>
    <SearchBox>
      <Glyph size={22}><circle cx="12" cy="12" r="9.500" stroke="#f2f2f2" strokeWidth="3" /></Glyph>
      <TaskSearch aria-label="搜索" placeholder="在这里输入你要搜索的内容" />
      <Glyph size={16} box={16}><rect x="5.500" y=".5" width="5" height="9" rx="2" stroke="#aaa" /><path d="M3 7v3.500c0 1.500 1 2 2 2h6c1 0 2-.5 2-2V7M8 12.500v3M5 15.500h6" stroke="#aaa" /></Glyph>
    </SearchBox>
    <TaskGroup $gap={3}>
      <TaskButton aria-label="任务视图"><Glyph size={20} box={20}><path d="M4.500 3.500h11v13h-11zM2.500 5.500h-2v9h2M17.500 5.500h2v9h-2" stroke="#fff" /></Glyph></TaskButton>
      <TaskButton aria-label="应用">
        <Glyph size={24}>
          <g fill="#e6eaec">
            <path d="M11.700 11V3C8-.5 2 2 2 6.500c0 3.500 3 4.500 5.500 4 2-.3 3.500-.5 4.200.5z" />
            <path d="M13 11.700h8C24.500 8 22 2 17.500 2c-3.500 0-4.500 3-4 5.500.3 2 .5 3.500-.5 4.200z" />
            <path d="M12.300 13v8c3.700 3.500 9.700 1 9.700-3.500 0-3.500-3-4.500-5.500-4-2 .3-3.500.5-4.200-.5z" />
            <path d="M11 12.300H3C-.5 16 2 22 6.500 22c3.500 0 4.500-3 4-5.500-.3-2-.5-3.500.5-4.200z" />
          </g>
        </Glyph>
      </TaskButton>
      <TaskButton aria-label="浏览器"><Glyph size={24}><path d={letterBody} stroke="#e8e8e8" strokeWidth="3.600" /><path d={letterRing} stroke="#e8e8e8" strokeWidth="1.300" /></Glyph></TaskButton>
      <TaskButton aria-label="通知">
        <Glyph size={32} box={32}>
          <g transform="translate(2 5)"><path d={swirl} stroke="#d5d9da" strokeWidth="1.400" /></g>
          <path d="M24 0c4 .5 4.500 4 4.500 6.500L31 10v1H18v-1l2-3.500C20 4 20 .5 24 0zM22.500 12h3.500l-1.700 2z" fill="#f0ab12" />
        </Glyph>
      </TaskButton>
    </TaskGroup>
    <TaskGroup $gap={1} $lead={4}>
      <TaskButton aria-label="Edge"><Glyph size={22}><path d="M2 11C3 5 7 1 13 1c6 0 9.500 4 9.500 9v3.500H9c0 5 7.500 6 12.500 3V21.500C13 26 4 22 4 14.500c0-3 1.500-5.500 4-7C5 8 3.500 9 2 11zm7-1.500h7.500C16.500 4.500 9.500 5 9 9.500z" fill="#0a7bdc" /></Glyph></TaskButton>
      <TaskButton aria-label="Internet Explorer"><Glyph size={26}><path d={letterBody} stroke="#3fa4ec" strokeWidth="4" /><path d={letterRing} stroke="#f8cf3c" strokeWidth="1.700" /></Glyph></TaskButton>
      <TaskButton $running aria-label="文件资源管理器"><Glyph size={24}><path d="M1 3h8l1.500 2H23v16H1z" fill="#ffe08a" /><path d="M1 5h22" stroke="#e8b94a" /><path d="M5 22v-8.500h14V22h-3.500v-5h-7v5z" fill="#3aa7e0" /></Glyph></TaskButton>
      <TaskButton $running aria-label="广联达"><Glyph size={24}><path d="M23.500 2C20 4 22 5 18 6c-2-1-6-1-8 2-2.500 3.500 0 9 4 8.500 2.500-.3 3-2.500 1.500-3.500 3-1.500 6.500.5 6 4-.5 4-5 6.500-9.500 6.500C4 23.500 0 17 1.500 11 3 4 12 0 23.500 2z" fill="#2196ee" /><path d="M4 9c2-4 7-6 12-5.500" stroke="#7fd0ff" strokeWidth="1.200" /></Glyph></TaskButton>
      <TaskButton $running aria-label="360浏览器"><Glyph size={24}><circle cx="12" cy="12" r="11" fill="#fff" /><circle cx="12" cy="12" r="10" fill="#55b92e" /><path d="M6 11c1-6 11-6 12 0zM6 13.500h12c-1 5-10 6-12 0z" fill="#fff" /><path d="M21 2C11 3 3 12 2 23" stroke="#2b9a2b" strokeWidth="1.500" /></Glyph></TaskButton>
      <TaskButton $active aria-label="钢筋算量软件"><Glyph size={24} box={16}>{icons.app}</Glyph></TaskButton>
    </TaskGroup>
    <Tray>
      <TrayText $width={26}>链接</TrayText>
      <TrayText $width={50} $before={19}>12%<br />CPU使用</TrayText>
      <TrayIcons>
        <TrayButton aria-label="显示隐藏的图标"><Glyph size={12} box={12}><path d="m1 9 5-5.500L11 9" stroke="#fff" strokeWidth="1.300" /></Glyph></TrayButton>
        <TrayButton aria-label="提醒"><Glyph size={14} box={14}><path d="M7 0c4 .5 4 4 4 7l2.500 4v1H.5v-1L3 7c0-3 0-6.500 4-7zM5.500 12.500h3L7 14z" fill="#fff" /></Glyph></TrayButton>
        <TrayButton aria-label="电源"><Glyph size={16} box={16}><path d="M6 4.500h8.500v8H5V9M15.500 7v3M1.500 1v3M4.500 1v3M.5 4h5v2.500l-2 1.500-3-1.500zM3 8v4.500h2" stroke="#fff" /><path d="M7.500 6.500H13v4H7.500z" fill="#fff" /></Glyph></TrayButton>
        <TrayButton aria-label="网络"><Glyph size={14} box={14}><path d="M5 13c0-3 3-6 7-6M2.500 12c0-4 4-8 10-8" stroke="#fff" /><path d="M.5 10C1 5 6 1 12 1" stroke="#777" /><path d="M8 13c0-2 2-3 4-3v3z" fill="#fff" /></Glyph></TrayButton>
        <TrayButton aria-label="音量"><Glyph size={16} box={16}><path d="M.5 5.500h3l4-4v13l-4-4h-3zM9.500 6c1 1 1 3 0 4" stroke="#fff" /><path d="M11.500 4c2 2 2 6 0 8M13.500 2c3 3 3 9 0 12" stroke="#888" /></Glyph></TrayButton>
        <TrayButton $width={32} aria-label="触摸键盘"><Glyph size={23} height={13} box={23}><path d="M.5.5h22v12H.5z" stroke="#fff" /><path d="M3 3.500h17M3 6.500h17" stroke="#fff" strokeDasharray="1 1" /><path d="M3 9.500h2M6 9.500h11M18 9.500h2" stroke="#fff" /></Glyph></TrayButton>
        <TrayButton $width={26}>中</TrayButton>
        <TrayButton $width={26} aria-label="搜狗输入法">
          <Glyph size={16}>
            <path d="m1 3 19-3 4 19-19 4z" fill="#f04e1f" />
            <path d="M18 6.500c-5-2-10.500-1-10.500 2s10 2 9.500 5.500-6 4.500-11 2.500" stroke="#fff" strokeWidth="3.200" />
          </Glyph>
        </TrayButton>
      </TrayIcons>
      <TrayText $width={60} $before={12}>8:28<br />2018/7/20</TrayText>
      <ActionCenter $width={56} aria-label="操作中心"><Glyph size={16} box={16}><path d="M.5 1.500h15v11H11L8 15.500l-2.500-3h-5z" stroke="#fff" strokeWidth="1.200" /></Glyph></ActionCenter>
      <ShowDesktop aria-label="显示桌面" />
    </Tray>
  </Taskbar>
);

export default function App() {
  return (
    <Desktop>
      <GlobalStyle />
      <TitleBar>
        <Icon name="app" />
        <Title>
          <Han>广联达</Han>BIM<Han>钢筋算量软件</Han> GGJ2013 - [C:\Users\Administrator.PC-20141127NRHM\Desktop\<Han>白龙村</Han>-2018-02-02-19-24-35(2666<Han>版</Han>).GGJ12]
        </Title>
        <WindowButton aria-label="最小化"><Glyph size={10} box={10}><path d="M0 5.500h10" stroke="#000" /></Glyph></WindowButton>
        <WindowButton aria-label="还原"><Glyph size={10} box={10}><path d="M.5 2.500h7v7h-7zM2.500 2.500v-2h7v7h-2" stroke="#000" /></Glyph></WindowButton>
        <WindowButton aria-label="关闭"><Glyph size={10} box={10}><path d="m0 0 10 10M10 0 0 10" stroke="#000" /></Glyph></WindowButton>
      </TitleBar>

      <BarRow $height={31}>
        <Band $plain $gap={9} $lead={7}>
          <MenuList>
            {menus.map(m => <ToolButton key={m}>{m}</ToolButton>)}
          </MenuList>
          <Tool icon="newChange" label="新建变更" caret="far" iconWidth={15} />
          <Tool icon="robot" label="广小二" />
        </Band>
        <Band $width={187} $lead={0}>
          <NewsLink href="#">为什么筏板XY方向布置..</NewsLink>
        </Band>
        <Band $width={240} $gap={10}>
          <Tool icon="avatar" label="13907298339" caret="far" />
          <span>造价豆:0</span>
          <Icon name="bell" />
          <More />
        </Band>
      </BarRow>

      <BarRow $height={30}>
        <Band $width={151} $lead={5}>
          <IconButton aria-label="新建"><Icon name="newFile" /></IconButton>
          <IconButton aria-label="打开"><Icon name="open" /><Caret lead={6} /></IconButton>
          <IconButton aria-label="保存"><Icon name="save" /></IconButton>
          <Separator />
          <IconButton aria-label="撤销"><Icon name="undo" /><Caret lead={6} /></IconButton>
          <More />
        </Band>
        <Band $width={548}>
          <Tool icon="draw" label="绘图" />
          <Tool icon="sum" label="汇总计算" />
          <Tool icon="cloud" label="云检查" />
          <Tool icon="align" label="平齐板顶" off />
          <Tool icon="find" label="查找图元" off />
          <Tool icon="glasses" label="查看钢筋量" off />
          <Tool icon="batch" label="批量选择" off />
          <More />
        </Band>
        <Band $lead={2} $gap={7}>
          <Tool icon="plane" label="二维" caret="far" off framed iconWidth={15} />
          <Tool icon="cube" label="俯视" caret="far" off />
          <Tool icon="orbit" label="动态观察" off />
          <Tool icon="part3d" label="局部三维" off />
          <Separator $pull={3} />
          <Tool icon="zoomAll" label="全屏" off />
          <Tool icon="zoom" label="缩放" caret="far" off />
          <Tool icon="pan" label="平移" caret="far" off />
          <Tool icon="rotate" label="屏幕旋转" caret="near" off />
          <Separator $pull={3} />
          <Tool icon="levels" label="选择楼层" off />
          <More />
        </Band>
      </BarRow>

      <Workspace>
        <Navigation />
        <Content>
          <BarRow $height={28}>
            <Band $gap={6}>
              <Tool icon="create" label="新建" caret="near" />
              <Tool icon="remove" label="删除" />
              <Tool icon="copy" label="复制" />
              <Tool icon="rename" label="重命名" />
              <Separator />
              <FloorLabel>
                楼层
                <FloorBox>
                  <FloorSelect defaultValue="首层"><option>首层</option></FloorSelect>
                  <Caret />
                </FloorBox>
              </FloorLabel>
              <Separator />
              <Tool icon="sort" label="排序" caret="near" />
              <Tool icon="filter" label="过滤" caret="near" />
              <Separator />
              <Tool icon="copyFrom" label="从其他楼层复制构件" />
              <Tool icon="copyTo" label="复制构件到其他楼层" />
              <Separator />
              <Tool label="查找" caret="near" inset />
              <Separator />
              <Tool icon="up" label="上移" />
              <Tool icon="down" label="下移" />
            </Band>
          </BarRow>
          <Columns>
            <ComponentList />
            <EditorPanel>
              <TabStrip>
                <Tab>属性编辑</Tab>
                <TabRest />
              </TabStrip>
              <Sheet>
                <PropertyGrid />
              </Sheet>
            </EditorPanel>
          </Columns>
        </Content>
      </Workspace>

      <StatusBar>
        <StatusCell $width={148} />
        <StatusCell $width={78}>层高:4.5m</StatusCell>
        <StatusCell $width={98}>底标高:-0.05m</StatusCell>
        <StatusCell $width={48}>0</StatusCell>
        <StatusCell>格式：级别+直径@间距，如：C6@200或C6-200</StatusCell>
        <StatusCell $width={70}>128.1 FPS</StatusCell>
      </StatusBar>

      <WindowsTaskbar />
      <Ime />
      <Marker $x={234} $y={224} $w={127} $h={56} />
      <Marker $x={388} $y={294} $w={370} $h={54} />
    </Desktop>
  );
}
